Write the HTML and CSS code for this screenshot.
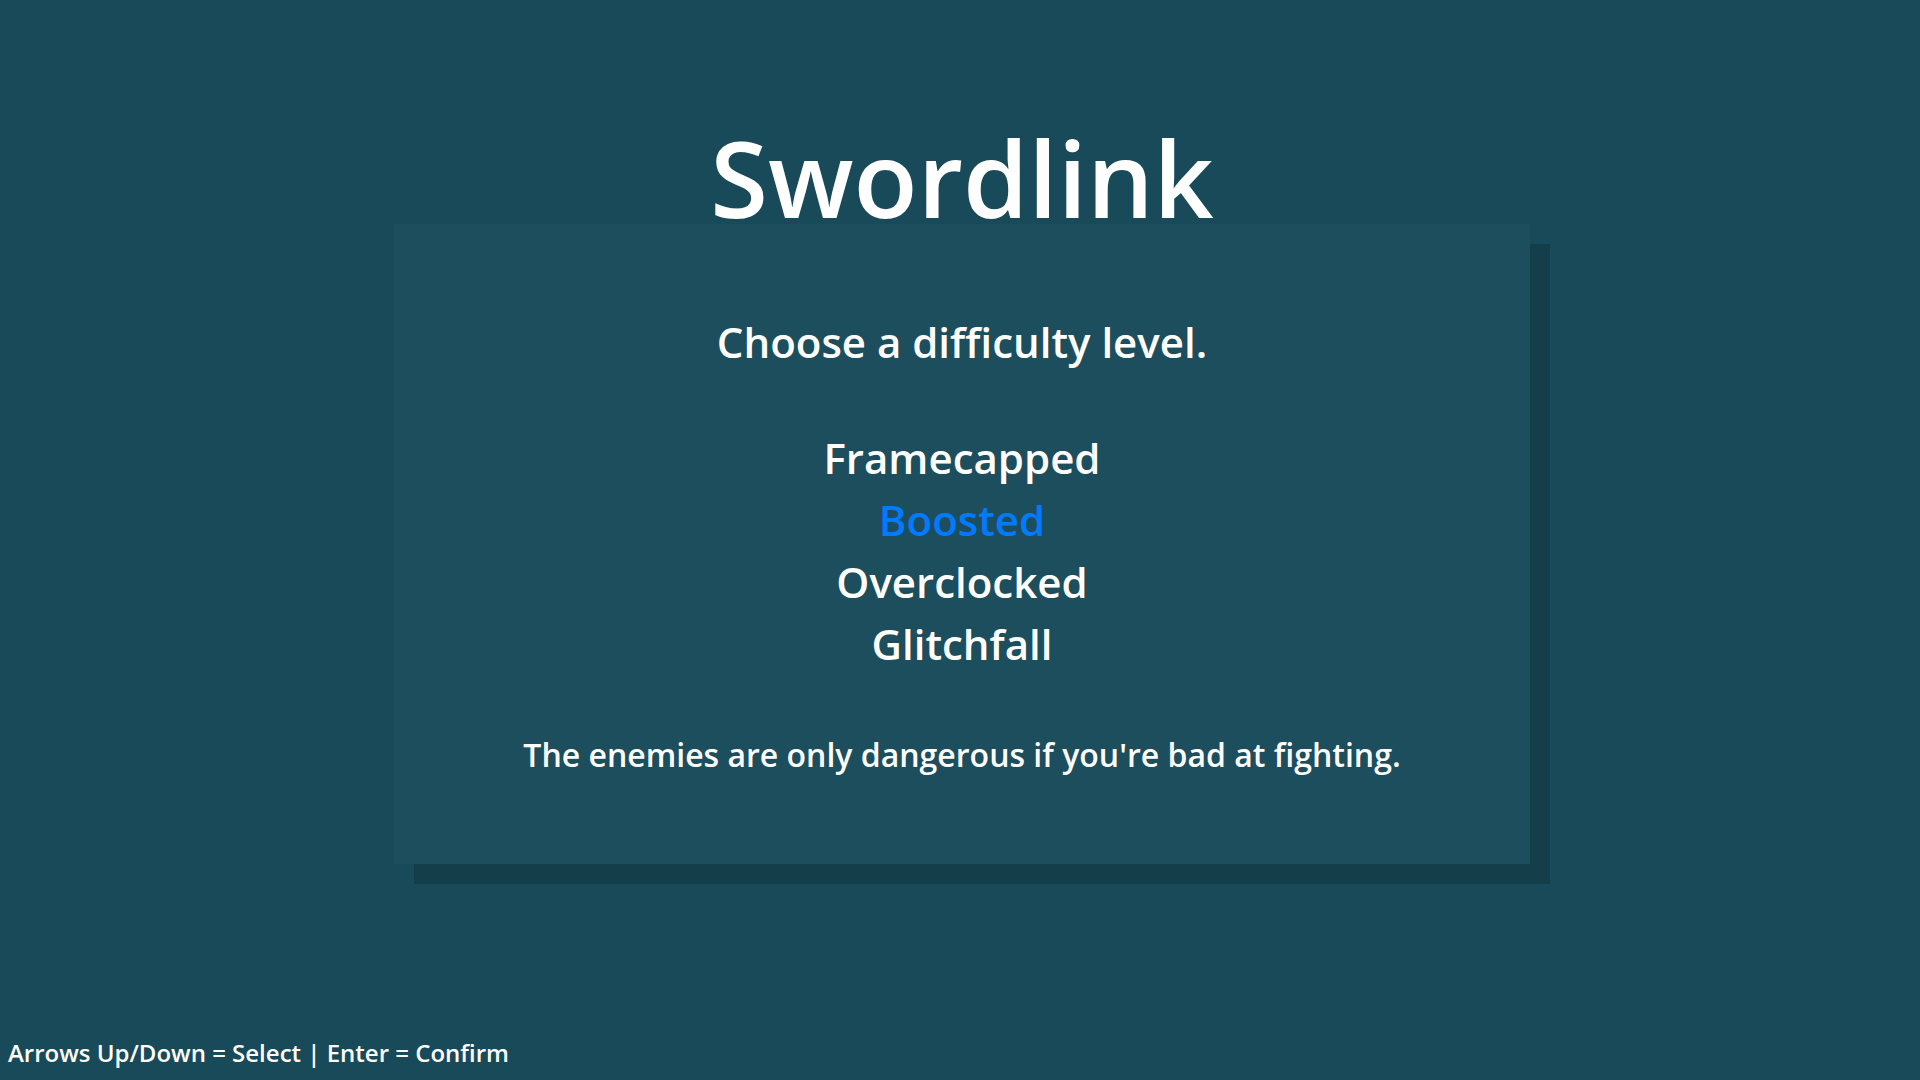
FILE: index.html
```html
<!DOCTYPE html>
<html lang="en">
<head>
<meta charset="utf-8">
<title>Swordlink</title>
<link rel="stylesheet" href="styles.css">
</head>
<body>
<div class="screen">
  <main class="stage">
    <h1 class="title">Swordlink</h1>
    <section class="panel">
      <h2 class="prompt">Choose a difficulty level.</h2>
      <ul class="menu">
        <li class="item">Framecapped</li>
        <li class="item selected">Boosted</li>
        <li class="item">Overclocked</li>
        <li class="item">Glitchfall</li>
      </ul>
      <p class="desc">The enemies are only dangerous if you're bad at fighting.</p>
    </section>
  </main>
  <footer class="hint">Arrows Up/Down = Select | Enter = Confirm</footer>
</div>
</body>
</html>
```

FILE: styles.css
```css
html, body {
  margin: 0;
  padding: 0;
  height: 100%;
}
body {
  background: #184a59;
  color: #ffffff;
  font-family: "Open Sans", "Noto Sans", sans-serif;
  overflow: hidden;
}
.screen {
  height: 100vh;
  display: flex;
  flex-direction: column;
}
.stage {
  flex: 1;
  display: flex;
  flex-direction: column;
  align-items: center;
  padding-top: 125px;
  padding-left: 4px;
}
.title {
  position: relative;
  z-index: 1;
  margin: 0;
  font-size: 105px;
  font-weight: 600;
  line-height: 106px;
  text-align: center;
}
.panel {
  width: 1136px;
  margin-top: -7px;
  box-sizing: border-box;
  padding: 94px 0 89px;
  background: #1c4e5d;
  box-shadow: 20px 20px 0 0 #143e4a;
  text-align: center;
}
.prompt {
  margin: 0;
  font-size: 42px;
  font-weight: 600;
  line-height: 48px;
}
.menu {
  list-style: none;
  margin: 61px 0 0;
  padding: 0;
}
.item {
  font-size: 42px;
  font-weight: 600;
  line-height: 62px;
}
.item.selected {
  color: #007bff;
}
.desc {
  margin: 60px 0 0;
  font-size: 32px;
  font-weight: 600;
  line-height: 40px;
}
.hint {
  padding: 0 0 13px 8px;
  font-size: 24px;
  font-weight: 600;
  line-height: 29px;
}
```
